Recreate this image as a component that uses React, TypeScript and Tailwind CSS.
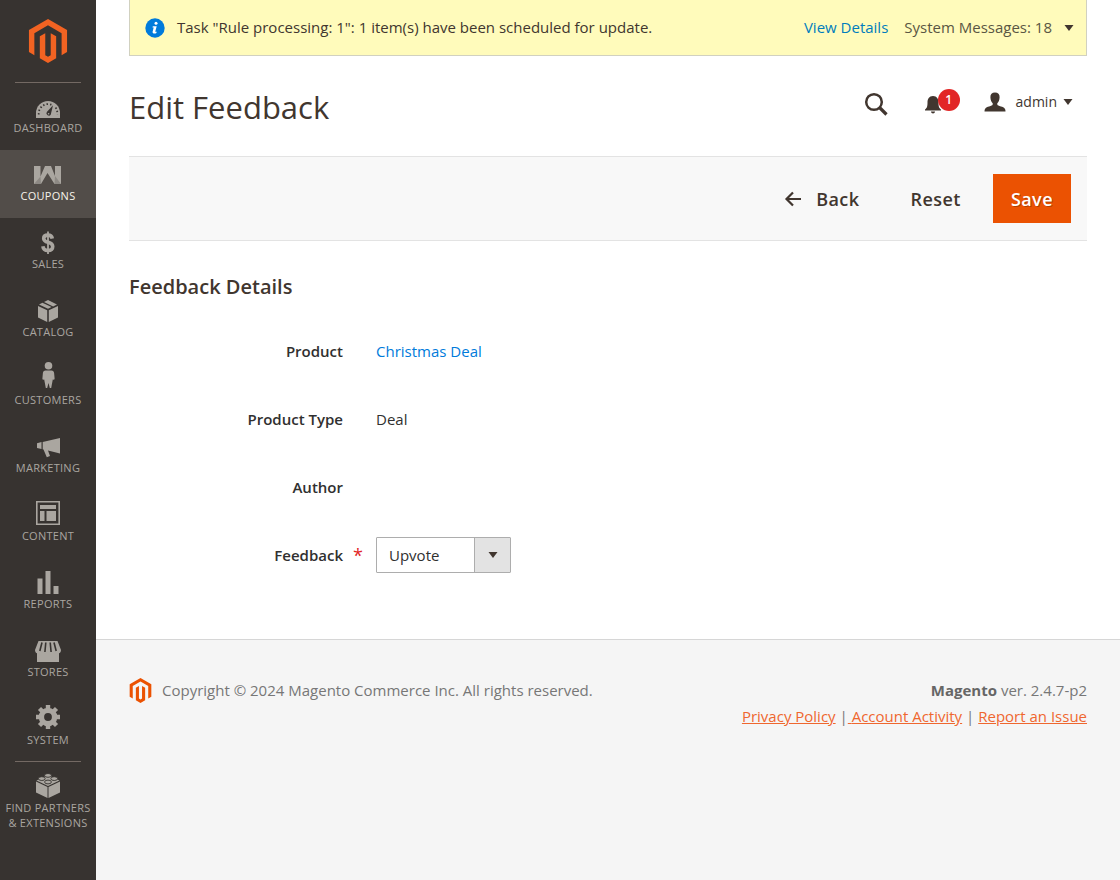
import React from "react";
import { FaMagento } from "react-icons/fa";

function DashboardIcon() {
  return (
    <>
      <path d="M4 30v-5a12 12 0 0 1 24 0v5z" fill="currentColor" />
      <path
        d="M6.8 26.5a9.4 9.4 0 0 1 13.6-9.4M23.6 19.6a9.4 9.4 0 0 1 1.6 6.9"
        fill="none"
        stroke="#373330"
        strokeWidth="1.8"
        strokeDasharray="1.4 2.1"
      />
      <path d="M21 17.2l-2.2 9.2a2.3 2.3 0 1 1-4-2.4z" fill="#373330" />
      <circle cx="16.6" cy="25.8" r="0.8" fill="currentColor" />
    </>
  );
}

function CouponsIcon() {
  return (
    <>
      <path d="M2 10h6.500v10.500L13 10h6l4 10V10h6v18h-6.500L15.500 17 9 28H2z" fill="currentColor" />
      <path d="M8.500 20.500L9 28H2zM23 20l6 8h-6.500z" fill="#373330" opacity="0.25" />
    </>
  );
}

function SalesIcon() {
  return (
    <g fill="none" stroke="currentColor">
      <path
        d="M20.3 14.6c-.4-2.4-2-3.5-4.400-3.500-2.600 0-4.200 1.200-4.200 3.300 0 5.200 9 2.600 9 8 0 2.600-1.900 4-4.800 4-3 0-4.700-1.400-5-4.200"
        strokeWidth="3.6"
      />
      <path d="M16 7.5V30" strokeWidth="1.8" />
    </g>
  );
}

function CatalogIcon() {
  return (
    <g fill="currentColor">
      <path d="M6 14l9.2 4.2V30L6 25.400zM26 14l-9.200 4.200V30l9.200-4.600z" />
      <path d="M7 12.500l3.400-1.800 9.100 4.400-3.500 1.700zM12 9.900L16 8l9 4.500-3.900 1.900z" />
    </g>
  );
}

function CustomersIcon() {
  return (
    <g fill="currentColor">
      <circle cx="16.5" cy="5.8" r="3.8" />
      <path d="M13.5 10.4h6c1.6 0 2.4 1 2.6 2.6l.5 5.4c.1 1.2-.9 1.6-1.8 1.2l-1.6 8.4h-1.4l-1.3-5-1.3 5h-1.4l-1.6-8.4c-.9.4-1.9 0-1.8-1.2l.5-5.4c.2-1.6 1-2.6 2.6-2.6z" />
    </g>
  );
}

function MarketingIcon() {
  return (
    <path
      d="M28 10v15.5l-12-3 2 5.4-3.2 1.3-3.3-7.6-.8-.3v-7.2zM5 15.2l4.5-1.2v7L5 20z"
      fill="currentColor"
    />
  );
}

function ContentIcon() {
  return (
    <>
      <path d="M4.8 5.8h22.4v22.4H4.8z" fill="none" stroke="currentColor" strokeWidth="1.6" />
      <path d="M8 9h16v4H8zM8 15h4.5v10H8zM14.5 15H24v10h-9.5z" fill="currentColor" />
    </>
  );
}

function ReportsIcon() {
  return <path d="M5.5 14.5h5V30h-5zM13.5 7h5v23h-5zM21.5 22h5v8h-5z" fill="currentColor" />;
}

function StoresIcon() {
  return (
    <>
      <path d="M6.500 9h19l3.500 9c0 2-1 3-2 3.200V30H5v-8.800C4 21 3 20 3 18z" fill="currentColor" />
      <path
        d="M10 10.500L7.800 19M13.800 10.500L12.900 20M18.200 10.500l.9 9.500M22 10.500l2.200 8.500"
        stroke="#373330"
        strokeWidth="1.6"
      />
    </>
  );
}

function SystemIcon() {
  return (
    <g fill="none" stroke="currentColor">
      <circle cx="16" cy="17" r="6.6" strokeWidth="5.4" />
      <path
        d="M16 5v4M16 25v4M4 17h4M24 17h4M7.500 8.500l3 3M21.500 22.500l3 3M24.500 8.500l-3 3M10.500 22.500l-3 3"
        strokeWidth="4.4"
      />
    </g>
  );
}

function PartnersIcon() {
  return (
    <>
      <path d="M4 13.500l11.500 5.500v11L4 24.500zM28 13.500L16.500 19v11L28 24.500z" fill="currentColor" />
      <path d="M4.500 12.500L16 7l11.500 5.500L16 18z" fill="currentColor" />
      <g fill="currentColor" stroke="#373330" strokeWidth="0.9">
        <ellipse cx="16" cy="7.4" rx="3.4" ry="1.9" />
        <ellipse cx="9.8" cy="10.6" rx="3.4" ry="1.9" />
        <ellipse cx="22.2" cy="10.6" rx="3.4" ry="1.9" />
        <ellipse cx="16" cy="14" rx="3.4" ry="1.9" />
      </g>
    </>
  );
}

const menu = [
  { label: "Dashboard", icon: <DashboardIcon /> },
  { label: "Coupons", icon: <CouponsIcon />, active: true },
  { label: "Sales", icon: <SalesIcon /> },
  { label: "Catalog", icon: <CatalogIcon /> },
  { label: "Customers", icon: <CustomersIcon /> },
  { label: "Marketing", icon: <MarketingIcon /> },
  { label: "Content", icon: <ContentIcon /> },
  { label: "Reports", icon: <ReportsIcon /> },
  { label: "Stores", icon: <StoresIcon /> },
  { label: "System", icon: <SystemIcon /> },
];

function MenuItem({
  label,
  icon,
  active,
}: {
  label: React.ReactNode;
  icon: React.ReactNode;
  active?: boolean;
}) {
  return (
    <a
      href="#"
      className={`flex min-h-[68px] flex-col items-center pt-1.5 text-center text-[11px] leading-[15px] tracking-wide uppercase ${
        active ? "bg-[#524d49] text-[#f7f3eb]" : "text-[#aaa6a0]"
      }`}
    >
      <svg viewBox="0 0 32 32" className="size-8 text-[#aaa6a0]" aria-hidden="true">
        {icon}
      </svg>
      <span>{label}</span>
    </a>
  );
}

function Sidebar() {
  return (
    <nav className="w-24 shrink-0 bg-[#373330]">
      <a href="#" aria-label="Magento" className="flex h-[82px] justify-center pt-[19px]">
        <FaMagento className="h-11 w-10 text-[#f26322]" />
      </a>
      <hr className="mx-[15px] -mb-px border-[#736963]" />
      {menu.map((m) => (
        <MenuItem key={m.label} {...m} />
      ))}
      <hr className="mx-[15px] -mt-px border-[#736963]" />
      <MenuItem
        label={
          <>
            Find Partners
            <br />& Extensions
          </>
        }
        icon={<PartnersIcon />}
      />
    </nav>
  );
}

function Caret() {
  return (
    <svg viewBox="0 0 10 6" className="h-1.5 w-2.5" aria-hidden="true">
      <path d="M0.5 0h9L5 6z" fill="currentColor" />
    </svg>
  );
}

function SystemNotice() {
  return (
    <div className="flex h-14 items-center border border-t-0 border-[#d1d1c0] bg-[#fffbbb] pr-3 pl-[15px] text-[15px]">
      <svg viewBox="0 0 20 20" className="mr-3 size-5" aria-hidden="true">
        <circle cx="10" cy="10" r="9.7" fill="#007bdb" />
        <circle cx="11" cy="5.3" r="1.5" fill="#fff" />
        <path d="M7.800 8.300h3.900l-1.500 5.400h1.500l-.3 1.300c-1.300.8-4.300.9-3.800-1.200l1.100-4.200H7.500z" fill="#fff" />
      </svg>
      <p className="flex-1">Task "Rule processing: 1": 1 item(s) have been scheduled for update.</p>
      <a href="#" className="mr-4 text-[#007dbd]">
        View Details
      </a>
      <button type="button" className="flex items-center gap-3 text-[#5a5643]">
        System Messages: 18
        <span className="text-[#41362f]">
          <Caret />
        </span>
      </button>
    </div>
  );
}

function PageHeader() {
  return (
    <header className="flex h-[100px] items-center justify-between pr-3.5 text-[#41362f]">
      <h1 className="pt-0.5 text-[31px] leading-10">Edit Feedback</h1>
      <div className="flex items-center pb-1">
        <button type="button" aria-label="Search" className="mr-9">
          <svg viewBox="0 0 24 24" className="size-6" fill="none" stroke="currentColor" aria-hidden="true">
            <circle cx="10" cy="10" r="7.8" strokeWidth="2.5" />
            <path d="M15.500 15.500l7 7" strokeWidth="3.2" />
          </svg>
        </button>
        <button type="button" aria-label="Notifications" className="relative mr-6 flex h-6 w-9 items-center">
          <svg viewBox="0 0 18 20" className="h-5 w-[18px]" fill="currentColor" aria-hidden="true">
            <path d="M9 2c4 0 5.500 3 5.500 6.500 0 4 .5 5.500 2.500 7v1H1v-1c2-1.500 2.500-3 2.500-7C3.500 5 5 2 9 2zM7 17.500h4c0 2.500-4 2.500-4 0z" />
          </svg>
          <span className="absolute -top-[3px] right-0 flex size-[22px] items-center justify-center rounded-full bg-[#e22626] text-xs font-semibold text-white">
            1
          </span>
        </button>
        <button type="button" className="flex items-center pb-1 text-sm">
          <svg viewBox="0 0 22 20" className="mr-2.5 h-5 w-[22px]" fill="currentColor" aria-hidden="true">
            <path d="M11 .5c3 0 4.800 1.800 4.600 4.800-.1 2.700-1 5-2.400 6.200 0 1.500.6 2 2.300 2.500 4 1.100 6 1.700 6 5.500H.5c0-3.800 2-4.400 6-5.500 1.700-.5 2.300-1 2.300-2.500-1.400-1.200-2.300-3.500-2.400-6.200C6.200 2.300 8 .5 11 .5z" />
          </svg>
          <span className="mr-1.5">admin</span>
          <Caret />
        </button>
      </div>
    </header>
  );
}

function PageActions() {
  return (
    <div className="flex items-center justify-end border-y border-[#e3e3e3] bg-[#f8f8f8] px-4 py-[17px] text-lg leading-6 font-semibold tracking-wide text-[#41362f]">
      <button type="button" className="mr-[51px] flex items-center gap-3.5">
        <svg
          viewBox="0 0 18 16"
          className="h-4 w-[18px]"
          fill="none"
          stroke="currentColor"
          strokeWidth="2.2"
          aria-hidden="true"
        >
          <path d="M9 1.500L2.500 8 9 14.500M2.500 8H17" />
        </svg>
        Back
      </button>
      <button type="button" className="mr-8">
        Reset
      </button>
      <button
        type="button"
        className="h-[49px] bg-[#eb5202] px-[18px] text-white [text-shadow:1px_1px_0_rgba(0,0,0,0.25)]"
      >
        Save
      </button>
    </div>
  );
}

function FeedbackForm() {
  return (
    <section className="pt-8 pb-[66px]">
      <h2 className="text-xl leading-7 font-semibold text-[#41362f]">Feedback Details</h2>
      <div className="mt-8 grid grid-cols-[214px_1fr] items-center gap-x-[33px] gap-y-8 text-[15px] text-[#303030] *:flex *:h-9 *:items-center">
        <span className="justify-end font-semibold">Product</span>
        <a href="#" className="text-[#007bdb]">
          Christmas Deal
        </a>
        <span className="justify-end font-semibold">Product Type</span>
        <span>Deal</span>
        <span className="justify-end font-semibold">Author</span>
        <span />
        <label htmlFor="feedback" className="relative justify-end font-semibold">
          Feedback
          <span className="absolute -right-5 text-lg font-normal text-[#e22626]">*</span>
        </label>
        <div>
          <div className="relative h-9 w-[135px]">
            <select
              id="feedback"
              defaultValue="upvote"
              className="size-full appearance-none rounded-[1px] border border-[#adadad] bg-white pr-10 pl-3 text-[15px]"
            >
              <option value="upvote">Upvote</option>
              <option value="downvote">Downvote</option>
            </select>
            <span className="pointer-events-none absolute inset-y-px right-px flex w-9 items-center justify-center border-l border-[#adadad] bg-[#e3e3e3] text-[#41362f]">
              <Caret />
            </span>
          </div>
        </div>
      </div>
    </section>
  );
}

function Footer() {
  const link = "text-[#ef672f] underline";
  return (
    <footer className="flex flex-1 items-start justify-between border-t border-[#d6d6d6] bg-[#f5f5f5] px-[33px] pt-[37px] text-[15px] leading-[26px] text-[#777]">
      <p className="flex items-center gap-2.5">
        <FaMagento className="h-[25px] w-[23px] text-[#eb5202]" />
        Copyright © 2024 Magento Commerce Inc. All rights reserved.
      </p>
      <div className="text-right">
        <p>
          <strong className="font-bold text-[#666]">Magento</strong> ver. 2.4.7-p2
        </p>
        <p>
          <a href="#" className={link}>
            Privacy Policy
          </a>{" "}
          |
          <a href="#" className={`${link} whitespace-pre`}>
            {" "}
            Account Activity
          </a>{" "}
          |{" "}
          <a href="#" className={link}>
            Report an Issue
          </a>
        </p>
      </div>
    </footer>
  );
}

export default function App() {
  return (
    <div className="flex min-h-screen bg-white font-['Open_Sans',sans-serif] text-[#41362f]">
      <Sidebar />
      <div className="flex min-w-0 flex-1 flex-col">
        <main className="px-[33px]">
          <SystemNotice />
          <PageHeader />
          <PageActions />
          <FeedbackForm />
        </main>
        <Footer />
      </div>
    </div>
  );
}
